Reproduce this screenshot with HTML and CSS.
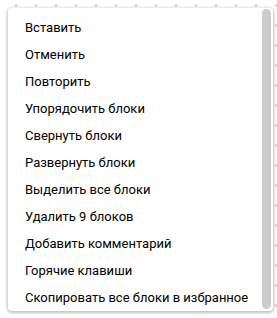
FILE: index.html
```html
<!DOCTYPE html>
<html lang="ru">
<head>
    <meta charset="UTF-8">
    <meta name="viewport" content="width=device-width, initial-scale=1.0">
    <title>Контекстное меню</title>
    <link rel="stylesheet" href="styles.css">
</head>
<body>

    <div class="workspace">
        <!-- сетка рабочей области -->
        <svg class="grid" width="277" height="318">
            <defs>
                <pattern id="dots" x="0" y="0" width="20" height="20" patternUnits="userSpaceOnUse">
                    <line x1="14.5" y1="5.5" x2="17.5" y2="5.5" stroke="#ccc" stroke-width="1"/>
                    <line x1="16" y1="4" x2="16" y2="7" stroke="#ccc" stroke-width="1"/>
                </pattern>
            </defs>
            <rect width="277" height="318" fill="#fff"/>
            <rect width="277" height="318" fill="url(#dots)"/>
        </svg>

        <!-- контекстное меню -->
        <div class="menu">
            <div class="menu-list">
                <div class="menu-item">Вставить</div>
                <div class="menu-item">Отменить</div>
                <div class="menu-item">Повторить</div>
                <div class="menu-item">Упорядочить блоки</div>
                <div class="menu-item">Свернуть блоки</div>
                <div class="menu-item">Развернуть блоки</div>
                <div class="menu-item">Выделить все блоки</div>
                <div class="menu-item">Удалить 9 блоков</div>
                <div class="menu-item">Добавить комментарий</div>
                <div class="menu-item">Горячие клавиши</div>
                <div class="menu-item">Скопировать все блоки в избранное</div>
            </div>
            <div class="scrollbar"></div>
        </div>
    </div>

</body>
</html>
```

FILE: styles.css
```css
body {
    margin: 0;
    font-family: Roboto, "Noto Sans", sans-serif;
    background-color: #fff;
}

.workspace {
    position: relative;
    width: 277px;
    height: 318px;
    overflow: hidden;
}

.grid {
    display: block;
}

.menu {
    position: absolute;
    left: 8px;
    top: 8px;
    width: 265px;
    height: 303px;
    background-color: #fff;
    border-radius: 4px;
    box-shadow: 0 1px 3px 1px rgba(0, 0, 0, 0.25);
    overflow: hidden;
}

.menu-list {
    padding: 6px 0;
}

.menu-item {
    height: 27px;
    line-height: 27px;
    padding: 0 17px;
    font-size: 13px;
    color: #000;
    white-space: nowrap;
    cursor: pointer;
}

/* полоса прокрутки поверх списка */
.scrollbar {
    position: absolute;
    top: 1px;
    right: 2px;
    bottom: 2px;
    width: 9px;
    background-color: #ccc;
    border-radius: 5px;
}
```
